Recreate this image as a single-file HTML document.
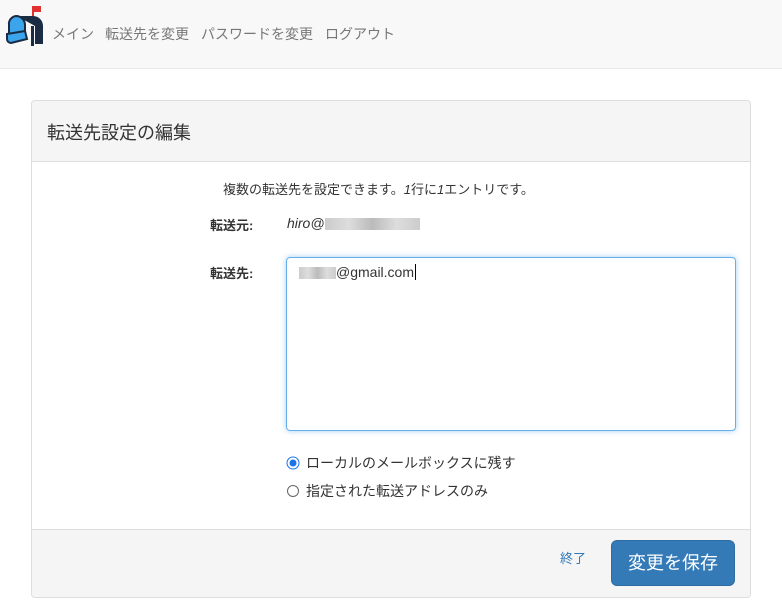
<!DOCTYPE html>
<html><head><meta charset="utf-8"><style>
*{box-sizing:border-box}
body{margin:0;width:782px;height:609px;background:#fff;font-family:"Liberation Sans","Noto Sans CJK JP",sans-serif;font-size:14px;color:#333;position:relative;overflow:hidden}
.nav{position:absolute;left:0;top:0;width:782px;height:69px;background:#f8f8f8;border-bottom:1px solid #e7e7e7}
.nav a{position:absolute;top:24px;color:#777;font-size:14px;text-decoration:none}
.panel{position:absolute;left:31px;top:100px;width:720px;height:498px;border:1px solid #ddd;border-radius:4px;overflow:hidden}
.ph{height:61px;background:#f5f5f5;border-bottom:1px solid #ddd;font-size:18px;padding:18px 15px;color:#333}
.pf{position:absolute;left:0;right:0;bottom:0;height:68px;background:#f5f5f5;border-top:1px solid #ddd}
.abs{position:absolute}
.blur{display:inline-block;height:12px;background:linear-gradient(90deg,#ccc,#ddd,#bbb,#ddd,#ccc);vertical-align:middle}
</style></head><body>
<div class="nav">
<svg class="abs" style="left:3px;top:4px" width="42" height="42" viewBox="0 0 42 42">
<rect x="29" y="2" width="2" height="14" fill="#e03030"/><rect x="31" y="2" width="7" height="6" fill="#e03030"/>
<path d="M14 12 h16 a10 10 0 0 1 10 10 v18 h-8 v-18z" fill="#1a2b44"/>
<path d="M13 12 a9 9 0 0 1 9 9 v8 l-16 2 v-10 a8 8 0 0 1 7-9z" fill="#3ba4ea" stroke="#1a2b44" stroke-width="2"/>
<path d="M4 30 l18 -3 l2 8 l-16 4 a4 4 0 0 1 -4-4z" fill="#3ba4ea" stroke="#1a2b44" stroke-width="2"/>
<rect x="28" y="22" width="3" height="20" fill="#1a2b44"/>
</svg>
<a style="left:52px">メイン</a><a style="left:105px">転送先を変更</a><a style="left:201px">パスワードを変更</a><a style="left:325px">ログアウト</a>
</div>
<div class="panel">
<div class="ph">転送先設定の編集</div>
<div class="abs" style="left:191px;top:78px;font-size:13px">複数の転送先を設定できます。<i>1</i>行に<i>1</i>エントリです。</div>
<div class="abs" style="left:178px;top:114px;font-weight:bold;font-size:13px">転送元:</div>
<div class="abs" style="left:255px;top:114px;font-style:italic;font-size:14px">hiro@<span class="blur" style="width:95px"></span></div>
<div class="abs" style="left:178px;top:162px;font-weight:bold;font-size:13px">転送先:</div>
<div class="abs" style="left:254px;top:156px;width:450px;height:174px;border:1px solid #66afe9;border-radius:4px;box-shadow:0 0 6px rgba(102,175,233,.6);padding:6px 12px;font-size:14px"><span class="blur" style="width:37px"></span>@gmail.com<span style="border-left:1px solid #000;margin-left:1px"></span></div>
<svg class="abs" style="left:254px;top:355px" width="14" height="14"><circle cx="7" cy="7" r="6" fill="#fff" stroke="#1a73e8" stroke-width="1"/><circle cx="7" cy="7" r="3.5" fill="#1a73e8"/></svg>
<div class="abs" style="left:274px;top:352px">ローカルのメールボックスに残す</div>
<svg class="abs" style="left:254px;top:383px" width="14" height="14"><circle cx="7" cy="7" r="5.5" fill="#fff" stroke="#666" stroke-width="1"/></svg>
<div class="abs" style="left:274px;top:380px">指定された転送アドレスのみ</div>
<div class="pf">
<div class="abs" style="left:528px;top:18px;color:#337ab7;font-size:13px">終了</div>
<div class="abs" style="left:579px;top:10px;width:124px;height:46px;background:#337ab7;border:1px solid #2e6da4;border-radius:6px;color:#fff;font-size:18px;text-align:center;line-height:44px">変更を保存</div>
</div>
</div>
</body></html>
